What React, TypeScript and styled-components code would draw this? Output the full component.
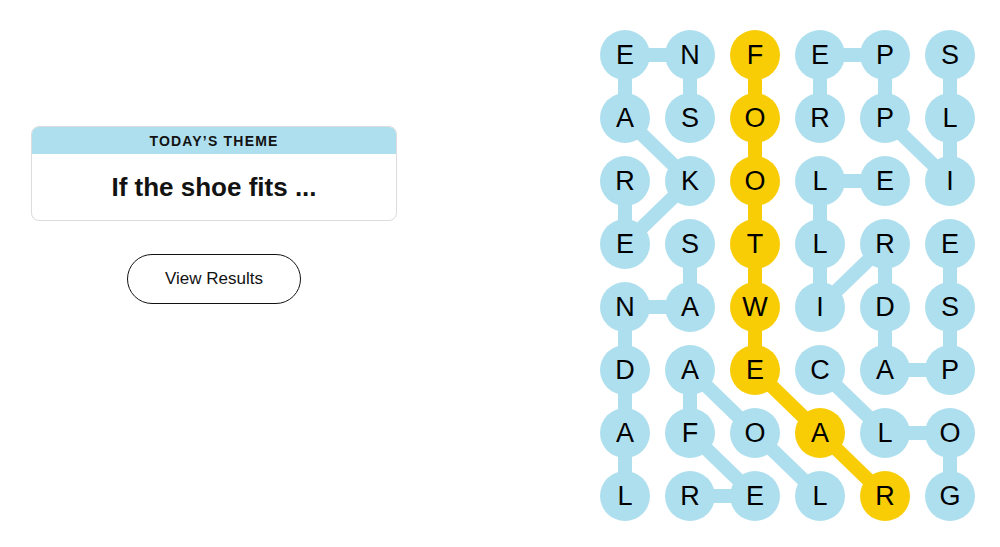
import React from 'react'
import styled, { createGlobalStyle } from 'styled-components'

const GlobalStyle = createGlobalStyle`
  html, body {
    margin: 0;
    padding: 0;
    background: #fff;
  }
  body {
    font-family: 'Liberation Sans', Arial, sans-serif;
    color: #121212;
  }
`

const BLUE = '#aedfee'
const YELLOW = '#f8cd05'
const CELL = 50
const COL_GAP = 15
const ROW_GAP = 13

const LETTERS = [
  'ENFEPS',
  'ASORPL',
  'RKOLEI',
  'ESTLRE',
  'NAWIDS',
  'DAECAP',
  'AFOALO',
  'LRELRG',
]

type Kind = 'theme' | 'spangram'
type Word = { kind: Kind; path: [number, number][] }

// [col, row] pairs in the order they were traced
const WORDS: Word[] = [
  { kind: 'theme', path: [[1, 1], [1, 0], [0, 0], [0, 1], [1, 2], [0, 3], [0, 2]] },
  { kind: 'theme', path: [[1, 3], [1, 4], [0, 4], [0, 5], [0, 6], [0, 7]] },
  { kind: 'theme', path: [[3, 7], [2, 6], [1, 5], [1, 6], [2, 7], [1, 7]] },
  { kind: 'spangram', path: [[2, 0], [2, 1], [2, 2], [2, 3], [2, 4], [2, 5], [3, 6], [4, 7]] },
  { kind: 'theme', path: [[5, 0], [5, 1], [5, 2], [4, 1], [4, 0], [3, 0], [3, 1]] },
  { kind: 'theme', path: [[5, 3], [5, 4], [5, 5], [4, 5], [4, 4], [4, 3], [3, 4], [3, 3], [3, 2], [4, 2]] },
  { kind: 'theme', path: [[3, 5], [4, 6], [5, 6], [5, 7]] },
]

const Page = styled.main`
  display: flex;
  align-items: flex-start;
  padding: 30px 0 0 31px;
`

const Sidebar = styled.section`
  width: 366px;
  padding-top: 96px;
  display: flex;
  flex-direction: column;
  align-items: center;
  gap: 33px;
`

const ThemeCard = styled.div`
  width: 100%;
  box-sizing: border-box;
  border: 1px solid #dcdcdc;
  border-radius: 8px;
  overflow: hidden;
`

const ThemeHeader = styled.div`
  height: 27px;
  background: ${BLUE};
  display: flex;
  align-items: center;
  justify-content: center;
  font-size: 14px;
  font-weight: 700;
  letter-spacing: 1.2px;
  color: #121212;
`

const ThemeBody = styled.div`
  height: 66px;
  display: flex;
  align-items: center;
  justify-content: center;
  font-size: 26px;
  font-weight: 700;
  color: #121212;
`

const ResultsButton = styled.button`
  width: 174px;
  height: 50px;
  border: 1px solid #121212;
  border-radius: 25px;
  background: #fff;
  font-family: 'Liberation Sans', Arial, sans-serif;
  font-size: 17px;
  color: #121212;
  cursor: pointer;
`

const Board = styled.div`
  position: relative;
  margin-left: 203px;
  display: grid;
  grid-template-columns: repeat(6, ${CELL}px);
  grid-auto-rows: ${CELL}px;
  column-gap: ${COL_GAP}px;
  row-gap: ${ROW_GAP}px;
`

const Links = styled.svg`
  position: absolute;
  inset: 0;
  width: 100%;
  height: 100%;
  pointer-events: none;
`

const Tile = styled.div<{ $kind: Kind }>`
  position: relative;
  width: ${CELL}px;
  height: ${CELL}px;
  border-radius: 50%;
  background: ${(p) => (p.$kind === 'spangram' ? YELLOW : BLUE)};
  display: flex;
  align-items: center;
  justify-content: center;
  font-size: 27px;
  color: #000;
  user-select: none;
`

const centre = (col: number, row: number) => ({
  x: col * (CELL + COL_GAP) + CELL / 2,
  y: row * (CELL + ROW_GAP) + CELL / 2,
})

function App(): JSX.Element {
  const kinds: Record<string, Kind> = {}
  WORDS.forEach((w) => w.path.forEach(([c, r]) => (kinds[`${c}-${r}`] = w.kind)))

  return (
    <>
      <GlobalStyle />
      <Page>
        <Sidebar>
          <ThemeCard>
            <ThemeHeader>TODAY’S THEME</ThemeHeader>
            <ThemeBody>If the shoe fits ...</ThemeBody>
          </ThemeCard>
          <ResultsButton>View Results</ResultsButton>
        </Sidebar>

        <Board>
          <Links>
            {WORDS.map((w, i) =>
              w.path.slice(1).map(([c, r], j) => {
                const [pc, pr] = w.path[j]
                const a = centre(pc, pr)
                const b = centre(c, r)
                return (
                  <line
                    key={`${i}-${j}`}
                    x1={a.x}
                    y1={a.y}
                    x2={b.x}
                    y2={b.y}
                    stroke={w.kind === 'spangram' ? YELLOW : BLUE}
                    strokeWidth={14}
                  />
                )
              })
            )}
          </Links>
          {LETTERS.map((row, r) =>
            row.split('').map((ch, c) => (
              <Tile key={`${c}-${r}`} $kind={kinds[`${c}-${r}`]}>
                {ch}
              </Tile>
            ))
          )}
        </Board>
      </Page>
    </>
  )
}

export default App
